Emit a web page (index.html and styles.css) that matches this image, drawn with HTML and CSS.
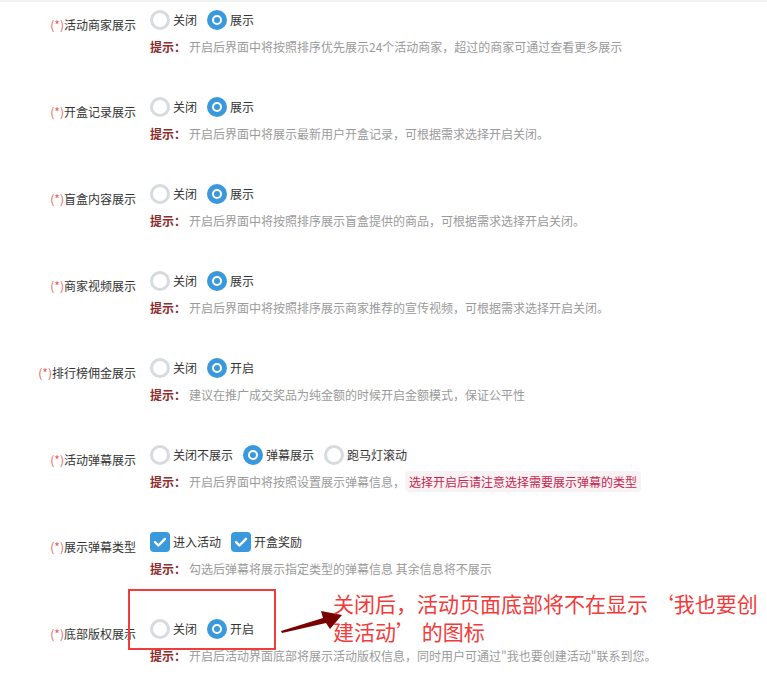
FILE: index.html
```html
<!DOCTYPE html>
<html lang="zh-CN">
<head>
    <meta charset="UTF-8">
    <title>活动设置</title>
    <link rel="stylesheet" href="styles.css">
</head>
<body>
    <div class="page">
        <!-- 活动商家展示 -->
        <div class="row">
            <div class="label"><span class="req">(*)</span>活动商家展示</div>
            <div class="field">
                <div class="options">
                    <span class="opt"><span class="radio"></span>关闭</span>
                    <span class="opt"><span class="radio on"></span>展示</span>
                </div>
                <div class="tip"><b>提示：</b>开启后界面中将按照排序优先展示24个活动商家，超过的商家可通过查看更多展示</div>
            </div>
        </div>

        <div class="row">
            <div class="label"><span class="req">(*)</span>开盒记录展示</div>
            <div class="field">
                <div class="options">
                    <span class="opt"><span class="radio"></span>关闭</span>
                    <span class="opt"><span class="radio on"></span>展示</span>
                </div>
                <div class="tip"><b>提示：</b>开启后界面中将展示最新用户开盒记录，可根据需求选择开启关闭。</div>
            </div>
        </div>

        <div class="row">
            <div class="label"><span class="req">(*)</span>盲盒内容展示</div>
            <div class="field">
                <div class="options">
                    <span class="opt"><span class="radio"></span>关闭</span>
                    <span class="opt"><span class="radio on"></span>展示</span>
                </div>
                <div class="tip"><b>提示：</b>开启后界面中将按照排序展示盲盒提供的商品，可根据需求选择开启关闭。</div>
            </div>
        </div>

        <div class="row">
            <div class="label"><span class="req">(*)</span>商家视频展示</div>
            <div class="field">
                <div class="options">
                    <span class="opt"><span class="radio"></span>关闭</span>
                    <span class="opt"><span class="radio on"></span>展示</span>
                </div>
                <div class="tip"><b>提示：</b>开启后界面中将按照排序展示商家推荐的宣传视频，可根据需求选择开启关闭。</div>
            </div>
        </div>

        <div class="row">
            <div class="label"><span class="req">(*)</span>排行榜佣金展示</div>
            <div class="field">
                <div class="options">
                    <span class="opt"><span class="radio"></span>关闭</span>
                    <span class="opt"><span class="radio on"></span>开启</span>
                </div>
                <div class="tip"><b>提示：</b>建议在推广成交奖品为纯金额的时候开启金额模式，保证公平性</div>
            </div>
        </div>

        <div class="row">
            <div class="label"><span class="req">(*)</span>活动弹幕展示</div>
            <div class="field">
                <div class="options">
                    <span class="opt"><span class="radio"></span>关闭不展示</span>
                    <span class="opt"><span class="radio on"></span>弹幕展示</span>
                    <span class="opt"><span class="radio"></span>跑马灯滚动</span>
                </div>
                <div class="tip"><b>提示：</b>开启后界面中将按照设置展示弹幕信息，<code class="mark">选择开启后请注意选择需要展示弹幕的类型</code></div>
            </div>
        </div>

        <div class="row">
            <div class="label"><span class="req">(*)</span>展示弹幕类型</div>
            <div class="field">
                <div class="options">
                    <span class="opt">
                        <span class="check"><svg viewBox="0 0 20 20"><path d="M5 10.2l3.4 3.3L15 6.8" fill="none" stroke="#fff" stroke-width="2.4" stroke-linecap="round" stroke-linejoin="round"/></svg></span>进入活动
                    </span>
                    <span class="opt">
                        <span class="check"><svg viewBox="0 0 20 20"><path d="M5 10.2l3.4 3.3L15 6.8" fill="none" stroke="#fff" stroke-width="2.4" stroke-linecap="round" stroke-linejoin="round"/></svg></span>开盒奖励
                    </span>
                </div>
                <div class="tip"><b>提示：</b>勾选后弹幕将展示指定类型的弹幕信息 其余信息将不展示</div>
            </div>
        </div>

        <div class="row last">
            <div class="label"><span class="req">(*)</span>底部版权展示</div>
            <div class="field">
                <div class="options">
                    <span class="opt"><span class="radio"></span>关闭</span>
                    <span class="opt"><span class="radio on"></span>开启</span>
                </div>
                <div class="tip"><b>提示：</b>开启后活动界面底部将展示活动版权信息，同时用户可通过"我也要创建活动"联系到您。</div>
            </div>

            <!-- 标注 -->
            <div class="note-box"></div>
            <svg class="note-arrow" viewBox="0 0 70 40">
                <polygon points="5,33 47,20 45,13 66,17 54,31 50,25 6,35" fill="#780000"/>
            </svg>
            <div class="note-text">关闭后，活动页面底部将不在显示 ‘我也要创<br>建活动’ 的图标</div>
        </div>
    </div>
</body>
</html>
```

FILE: styles.css
```css
body, html {
    margin: 0;
    padding: 0;
    background-color: #ffffff;
    font-family: "Noto Sans CJK SC", "Noto Sans", sans-serif;
    font-size: 12px;
    color: #333;
}

.page {
    border-top: 2px solid #f2f2f2;
    padding-top: 6px;
}

.row {
    display: flex;
    height: 87px;
}

.row.last {
    position: relative;
}

.label {
    width: 136px;
    text-align: right;
    padding-top: 8px;
    line-height: 18px;
    color: #333;
}

.req {
    color: #e8625a;
}

.field {
    margin-left: 14px;
}

.options {
    display: flex;
    align-items: center;
    height: 24px;
    gap: 10px;
}

.opt {
    display: flex;
    align-items: center;
    gap: 3px;
    line-height: 18px;
    color: #333;
}

.radio {
    box-sizing: border-box;
    width: 20px;
    height: 20px;
    border-radius: 50%;
    border: 3px solid #d6dbde;
    background: #fff;
}

.radio.on {
    border: none;
    background: #3a98dc;
    display: flex;
    align-items: center;
    justify-content: center;
}

.radio.on::after {
    content: "";
    width: 6px;
    height: 6px;
    border: 2px solid #fff;
    border-radius: 50%;
    background: #3a98dc;
}

.check {
    width: 20px;
    height: 20px;
    border-radius: 4px;
    background: #3a98dc;
}

.check svg {
    display: block;
    width: 20px;
    height: 20px;
}

.tip {
    margin-top: 6px;
    line-height: 18px;
    color: #9a9a9a;
    white-space: nowrap;
}

.tip b {
    color: #8c2e2e;
    margin-right: 3px;
}

.mark {
    font-family: inherit;
    font-size: 12px;
    color: #c7254e;
    background-color: #f9f2f4;
    padding: 2px 4px;
    border-radius: 4px;
}

/* annotation */
.note-box {
    position: absolute;
    left: 128px;
    top: -28px;
    width: 144px;
    height: 57px;
    border: 2px solid #f23b3b;
}

.note-arrow {
    position: absolute;
    left: 276px;
    top: -19px;
    width: 70px;
    height: 40px;
}

.note-text {
    position: absolute;
    left: 333px;
    top: -28px;
    font-size: 21px;
    line-height: 28px;
    color: #f23b3b;
    white-space: nowrap;
}
```
